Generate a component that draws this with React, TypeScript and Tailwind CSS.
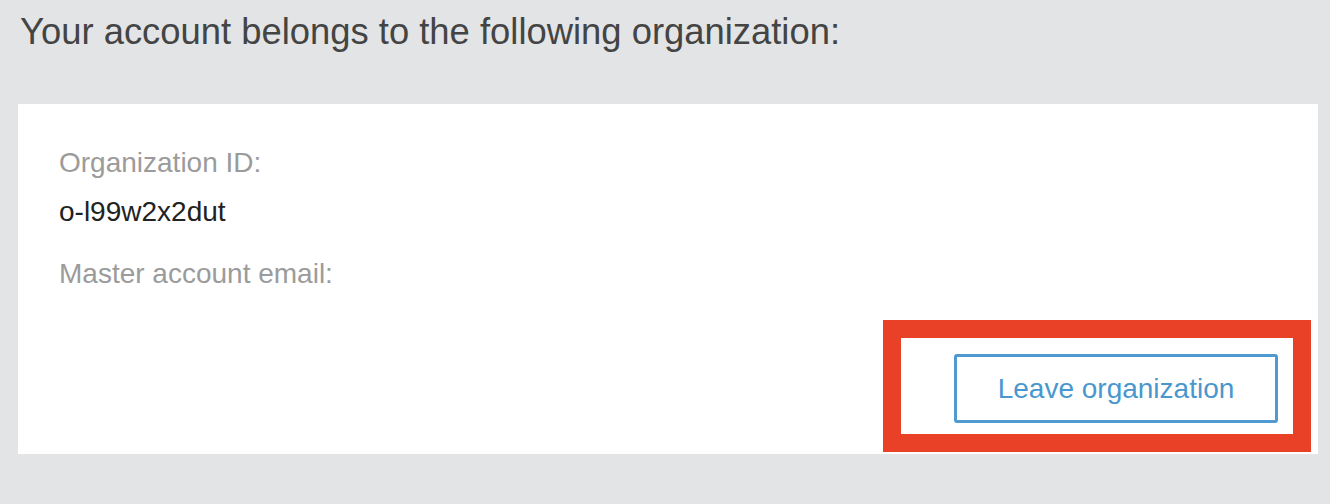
export default function App() {
  return (
    <div className="min-h-screen bg-[#e3e4e6] pt-[11px] pb-[50px] font-['Liberation_Sans',Arial,sans-serif]">
      <h1 className="pl-[20px] text-[36.4px] leading-[41px] text-[#444444]">
        Your account belongs to the following organization:
      </h1>

      {/* Organization card */}
      <div className="relative ml-[18px] mt-[52px] w-[1300px] bg-white pl-[41px] pr-[40px] pt-[43px] pb-[31px]">
        <div className="text-[28px] leading-[32px] text-[#9b9b9b]">Organization ID:</div>
        <div className="mt-[17px] text-[28px] leading-[32px] text-[#222222]">o-l99w2x2dut</div>
        <div className="mt-[30px] text-[28px] leading-[32px] text-[#9b9b9b]">Master account email:</div>

        <div className="mt-[64px] flex justify-end">
          <button className="flex h-[69px] w-[324px] items-center justify-center rounded-[3px] border-[3px] border-[#4f9bd1] text-[28px] text-[#4a97cf]">
            Leave organization
          </button>
        </div>

        {/* highlight annotation */}
        <div className="pointer-events-none absolute left-[865px] top-[216px] h-[132px] w-[428px] border-[18px] border-[#e94127]" />
      </div>
    </div>
  );
}
